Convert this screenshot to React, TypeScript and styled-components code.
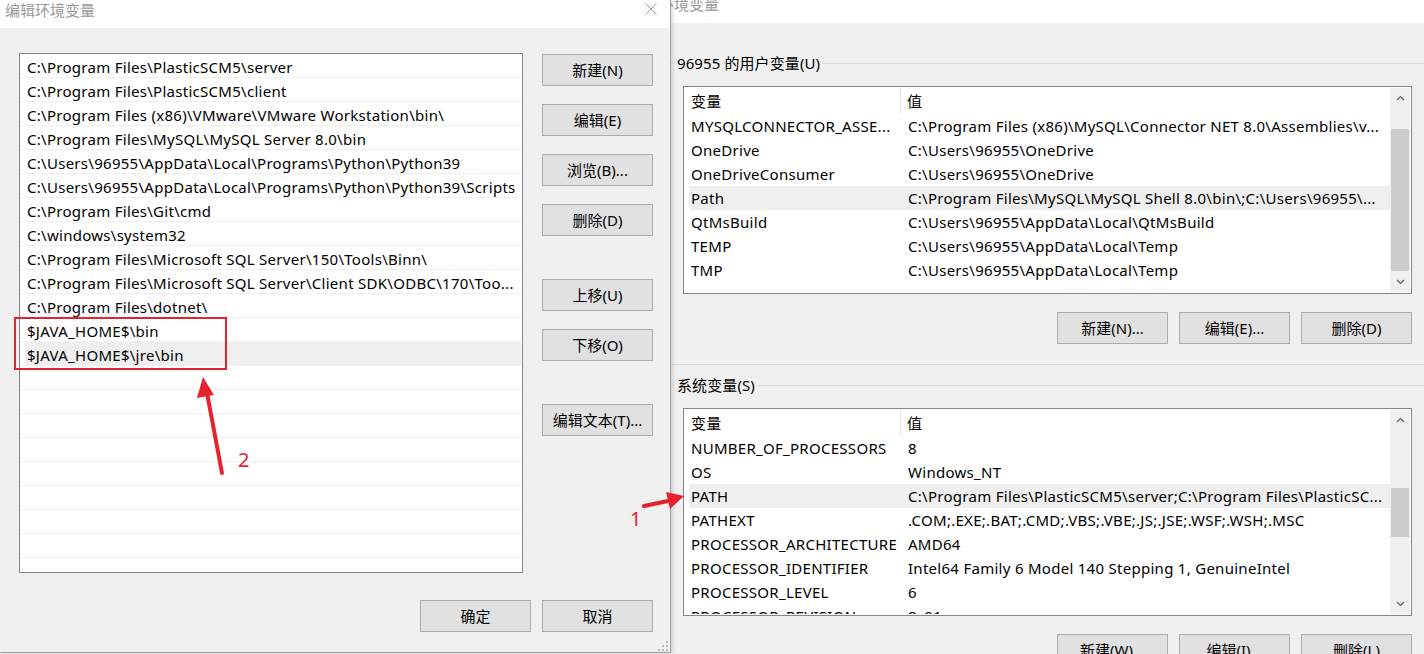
import React from 'react'
import styled, { createGlobalStyle } from 'styled-components'

const GlobalStyle = createGlobalStyle`
  html, body {
    margin: 0;
    padding: 0;
    background: #f0f0f0;
    overflow: hidden;
  }
  body {
    font-family: "Noto Sans", "Noto Sans CJK SC", sans-serif;
    font-size: 15px;
    letter-spacing: 0.28px;
    color: #000;
  }
`

const Desktop = styled.div`
  position: relative;
  width: 1424px;
  height: 654px;
  overflow: hidden;
  background: #f0f0f0;
`

/* ---------- left window: 编辑环境变量 ---------- */

const EditWindow = styled.section`
  position: absolute;
  left: 0;
  top: 0;
  z-index: 2;
  width: 670px;
  height: 652px;
  display: flex;
  flex-direction: column;
  background: #f0f0f0;
  border-right: 1px solid #a0a0a0;
  border-bottom: 1px solid #a0a0a0;
  box-shadow: 2px 0 4px rgba(0, 0, 0, 0.14);
`

const TitleBar = styled.div<{ $height: number; $inset: number }>`
  height: ${p => p.$height}px;
  flex: none;
  background: #fff;
  display: flex;
  justify-content: space-between;
  align-items: flex-start;
  padding: 0 13px 0 ${p => p.$inset}px;
  overflow: hidden;
`

const TitleText = styled.span<{ $shift: number }>`
  color: #999;
  font-size: 15px;
  letter-spacing: 0;
  line-height: 20px;
  margin-top: ${p => p.$shift}px;
  white-space: nowrap;
`

const CloseIcon = styled.svg`
  margin-top: 3px;
  width: 12px;
  height: 12px;
`

const EditBody = styled.div`
  flex: 1;
  display: flex;
  flex-direction: column;
  padding: 25px 17px 0 19px;
`

const EditMain = styled.div`
  display: grid;
  grid-template-columns: 504px 111px;
  column-gap: 19px;
  align-items: start;
`

const PathList = styled.div`
  height: 520px;
  box-sizing: border-box;
  border: 1px solid #828790;
  background: #fff;
  overflow: hidden;
`

const PathRow = styled.div<{ $hover?: boolean }>`
  height: 24px;
  box-sizing: border-box;
  border-bottom: 1px solid #f0f0f0;
  line-height: 23px;
  padding: 2px 0 0 7px;
  white-space: nowrap;
  overflow: hidden;
  background: ${p => (p.$hover ? 'linear-gradient(90deg, transparent 5px, #efefef 5px, #efefef calc(100% - 1px), transparent calc(100% - 1px))' : 'transparent')};
`

const SideButtons = styled.div`
  display: flex;
  flex-direction: column;
  gap: 18px;
  padding-top: 1px;
`

const Spacer = styled.div`
  height: 25px;
  margin-top: -18px;
`

const Button = styled.button`
  width: 111px;
  height: 32px;
  box-sizing: border-box;
  flex: none;
  padding: 0;
  background: #e1e1e1;
  border: 1px solid #adadad;
  font-family: inherit;
  font-size: 15px;
  letter-spacing: 0;
  color: #000;
  line-height: 30px;
  white-space: nowrap;
`

const EditFooter = styled.div`
  display: flex;
  justify-content: flex-end;
  gap: 11px;
  padding-top: 27px;
`

const ResizeGrip = styled.svg`
  position: absolute;
  right: 2px;
  bottom: 1px;
  width: 10px;
  height: 10px;
`

/* ---------- right window: 环境变量 ---------- */

const EnvWindow = styled.section`
  position: absolute;
  left: 655px;
  top: 0;
  z-index: 1;
  width: 787px;
  height: 720px;
  display: flex;
  flex-direction: column;
  background: #f0f0f0;
`

const EnvBody = styled.div`
  padding: 30px 10px 0 9px;
`

const Group = styled.div<{ $closed?: boolean; $top: number }>`
  margin-top: ${p => p.$top}px;
  padding-bottom: 20px;
  border-bottom: ${p => (p.$closed ? '1px solid #dcdcdc' : 'none')};
`

const GroupHeader = styled.div`
  height: 20px;
  display: flex;
  align-items: center;
`

const GroupLine = styled.div<{ $grow?: boolean }>`
  height: 1px;
  background: #dcdcdc;
  width: ${p => (p.$grow ? 'auto' : '10px')};
  flex: ${p => (p.$grow ? '1' : 'none')};
`

const GroupLabel = styled.span`
  padding: 0 3px 0 3px;
  line-height: 20px;
  letter-spacing: 0.1px;
  white-space: nowrap;
`

const GroupContent = styled.div`
  padding: 13px 20px 0 19px;
`

const Table = styled.div`
  width: 729px;
  height: 208px;
  box-sizing: border-box;
  border: 1px solid #828790;
  padding: 1px;
  background: #fff;
  display: flex;
`

const TableMain = styled.div`
  flex: 1;
  min-width: 0;
  overflow: hidden;
  display: flex;
  flex-direction: column;
`

const HeaderRow = styled.div`
  height: 26px;
  flex: none;
  display: flex;
  align-items: stretch;
`

const HeaderCell = styled.div<{ $first?: boolean }>`
  width: ${p => (p.$first ? '216px' : 'auto')};
  flex: ${p => (p.$first ? 'none' : '1')};
  padding-left: 6px;
  box-sizing: border-box;
  border-right: ${p => (p.$first ? '1px solid #e5e5e5' : 'none')};
  line-height: 26px;
`

const DataRow = styled.div<{ $hover?: boolean }>`
  height: 24px;
  flex: none;
  margin-left: 4px;
  display: flex;
  line-height: 25px;
  white-space: nowrap;
  background: ${p => (p.$hover ? '#efefef' : 'transparent')};
`

const NameCell = styled.div`
  width: 212px;
  flex: none;
  padding-left: 2px;
  box-sizing: border-box;
  overflow: hidden;
`

const ValueCell = styled.div`
  flex: 1;
  padding-left: 7px;
  overflow: hidden;
`

const ScrollBar = styled.div`
  width: 20px;
  flex: none;
  background: #f0f0f0;
  display: flex;
  flex-direction: column;
`

const ScrollArrow = styled.div`
  height: 20px;
  flex: none;
  display: flex;
  align-items: center;
  justify-content: center;
`

const ScrollTrack = styled.div`
  flex: 1;
`

const Thumb = styled.div<{ $offset: number; $size: number }>`
  margin: ${p => p.$offset}px 1px 0;
  height: ${p => p.$size}px;
  background: #cdcdcd;
`

const ButtonRow = styled.div`
  width: 729px;
  display: flex;
  justify-content: flex-end;
  gap: 11px;
  margin-top: 18px;
`

const Annotations = styled.svg`
  position: absolute;
  left: 0;
  top: 0;
  z-index: 3;
  pointer-events: none;
`

/* ---------- data ---------- */

const paths = [
  'C:\\Program Files\\PlasticSCM5\\server',
  'C:\\Program Files\\PlasticSCM5\\client',
  'C:\\Program Files (x86)\\VMware\\VMware Workstation\\bin\\',
  'C:\\Program Files\\MySQL\\MySQL Server 8.0\\bin',
  'C:\\Users\\96955\\AppData\\Local\\Programs\\Python\\Python39',
  'C:\\Users\\96955\\AppData\\Local\\Programs\\Python\\Python39\\Scripts',
  'C:\\Program Files\\Git\\cmd',
  'C:\\windows\\system32',
  'C:\\Program Files\\Microsoft SQL Server\\150\\Tools\\Binn\\',
  'C:\\Program Files\\Microsoft SQL Server\\Client SDK\\ODBC\\170\\Too...',
  'C:\\Program Files\\dotnet\\',
  '$JAVA_HOME$\\bin',
  '$JAVA_HOME$\\jre\\bin',
]

type EnvVar = [string, string]

const userVars: EnvVar[] = [
  ['MYSQLCONNECTOR_ASSE...', 'C:\\Program Files (x86)\\MySQL\\Connector NET 8.0\\Assemblies\\v...'],
  ['OneDrive', 'C:\\Users\\96955\\OneDrive'],
  ['OneDriveConsumer', 'C:\\Users\\96955\\OneDrive'],
  ['Path', 'C:\\Program Files\\MySQL\\MySQL Shell 8.0\\bin\\;C:\\Users\\96955\\...'],
  ['QtMsBuild', 'C:\\Users\\96955\\AppData\\Local\\QtMsBuild'],
  ['TEMP', 'C:\\Users\\96955\\AppData\\Local\\Temp'],
  ['TMP', 'C:\\Users\\96955\\AppData\\Local\\Temp'],
]

const systemVars: EnvVar[] = [
  ['NUMBER_OF_PROCESSORS', '8'],
  ['OS', 'Windows_NT'],
  ['PATH', 'C:\\Program Files\\PlasticSCM5\\server;C:\\Program Files\\PlasticSC...'],
  ['PATHEXT', '.COM;.EXE;.BAT;.CMD;.VBS;.VBE;.JS;.JSE;.WSF;.WSH;.MSC'],
  ['PROCESSOR_ARCHITECTURE', 'AMD64'],
  ['PROCESSOR_IDENTIFIER', 'Intel64 Family 6 Model 140 Stepping 1, GenuineIntel'],
  ['PROCESSOR_LEVEL', '6'],
  ['PROCESSOR_REVISION', '8c01'],
]

const Chevron = ({ up }: { up?: boolean }) => (
  <svg width="9" height="6" viewBox="0 0 9 6">
    <path d={up ? 'M1 5 L4.5 1.5 L8 5' : 'M1 1 L4.5 4.5 L8 1'} fill="none" stroke="#606060" strokeWidth="1.2" />
  </svg>
)

const VarTable = ({ rows, hover, thumbOffset, thumbSize }: { rows: EnvVar[]; hover: number; thumbOffset: number; thumbSize: number }) => (
  <Table>
    <TableMain>
      <HeaderRow>
        <HeaderCell $first>变量</HeaderCell>
        <HeaderCell>值</HeaderCell>
      </HeaderRow>
      {rows.map(([name, value], i) => (
        <DataRow key={name} $hover={i === hover}>
          <NameCell>{name}</NameCell>
          <ValueCell>{value}</ValueCell>
        </DataRow>
      ))}
    </TableMain>
    <ScrollBar>
      <ScrollArrow><Chevron up /></ScrollArrow>
      <ScrollTrack>
        <Thumb $offset={thumbOffset} $size={thumbSize} />
      </ScrollTrack>
      <ScrollArrow><Chevron /></ScrollArrow>
    </ScrollBar>
  </Table>
)

const RED = '#e6222e'

export default function App() {
  const emptyRows = Array.from({ length: 9 })
  return (
    <Desktop>
      <GlobalStyle />

      <EnvWindow>
        <TitleBar $height={23} $inset={4}>
          <TitleText $shift={-6}>环境变量</TitleText>
        </TitleBar>
        <EnvBody>
          <Group $closed $top={0}>
            <GroupHeader>
              <GroupLine />
              <GroupLabel>96955 的用户变量(U)</GroupLabel>
              <GroupLine $grow />
            </GroupHeader>
            <GroupContent>
              <VarTable rows={userVars} hover={3} thumbOffset={21} thumbSize={142} />
              <ButtonRow>
                <Button>新建(N)...</Button>
                <Button>编辑(E)...</Button>
                <Button>删除(D)</Button>
              </ButtonRow>
            </GroupContent>
          </Group>
          <Group $top={10}>
            <GroupHeader>
              <GroupLine />
              <GroupLabel>系统变量(S)</GroupLabel>
              <GroupLine $grow />
            </GroupHeader>
            <GroupContent>
              <VarTable rows={systemVars} hover={2} thumbOffset={58} thumbSize={49} />
              <ButtonRow>
                <Button>新建(W)...</Button>
                <Button>编辑(I)...</Button>
                <Button>删除(L)</Button>
              </ButtonRow>
            </GroupContent>
          </Group>
        </EnvBody>
      </EnvWindow>

      <EditWindow>
        <TitleBar $height={28} $inset={5}>
          <TitleText $shift={0}>编辑环境变量</TitleText>
          <CloseIcon viewBox="0 0 12 12">
            <path d="M0.5 0.5 L11.5 11.5 M11.5 0.5 L0.5 11.5" stroke="#999" strokeWidth="1" />
          </CloseIcon>
        </TitleBar>
        <EditBody>
          <EditMain>
            <PathList>
              {paths.map((p, i) => (
                <PathRow key={p} $hover={i === paths.length - 1}>{p}</PathRow>
              ))}
              {emptyRows.map((_, i) => (
                <PathRow key={'empty' + i} />
              ))}
            </PathList>
            <SideButtons>
              <Button>新建(N)</Button>
              <Button>编辑(E)</Button>
              <Button>浏览(B)...</Button>
              <Button>删除(D)</Button>
              <Spacer />
              <Button>上移(U)</Button>
              <Button>下移(O)</Button>
              <Spacer />
              <Button>编辑文本(T)...</Button>
            </SideButtons>
          </EditMain>
          <EditFooter>
            <Button>确定</Button>
            <Button>取消</Button>
          </EditFooter>
        </EditBody>
        <ResizeGrip viewBox="0 0 10 10">
          {[[8, 0], [8, 4], [4, 4], [8, 8], [4, 8], [0, 8]].map(([x, y]) => (
            <rect key={`${x}-${y}`} x={x} y={y} width="2" height="2" fill="#b8b8b8" />
          ))}
        </ResizeGrip>
      </EditWindow>

      <Annotations width="1424" height="654" viewBox="0 0 1424 654">
        <rect x="15" y="318" width="211" height="51" fill="none" stroke={RED} strokeWidth="2" />
        <path d="M222 473 L207 393" stroke={RED} strokeWidth="4" strokeLinecap="round" />
        <path d="M203 377 L197 398 L214 395 Z" fill={RED} />
        <text x="238" y="467" fill={RED} fontSize="20" fontFamily="Noto Sans, sans-serif">2</text>
        <path d="M644 506 L668 501" stroke={RED} strokeWidth="4" strokeLinecap="round" />
        <path d="M684 496 L666 492 L670 509 Z" fill={RED} />
        <text x="630" y="526" fill={RED} fontSize="20" fontFamily="Noto Sans, sans-serif">1</text>
      </Annotations>
    </Desktop>
  )
}
